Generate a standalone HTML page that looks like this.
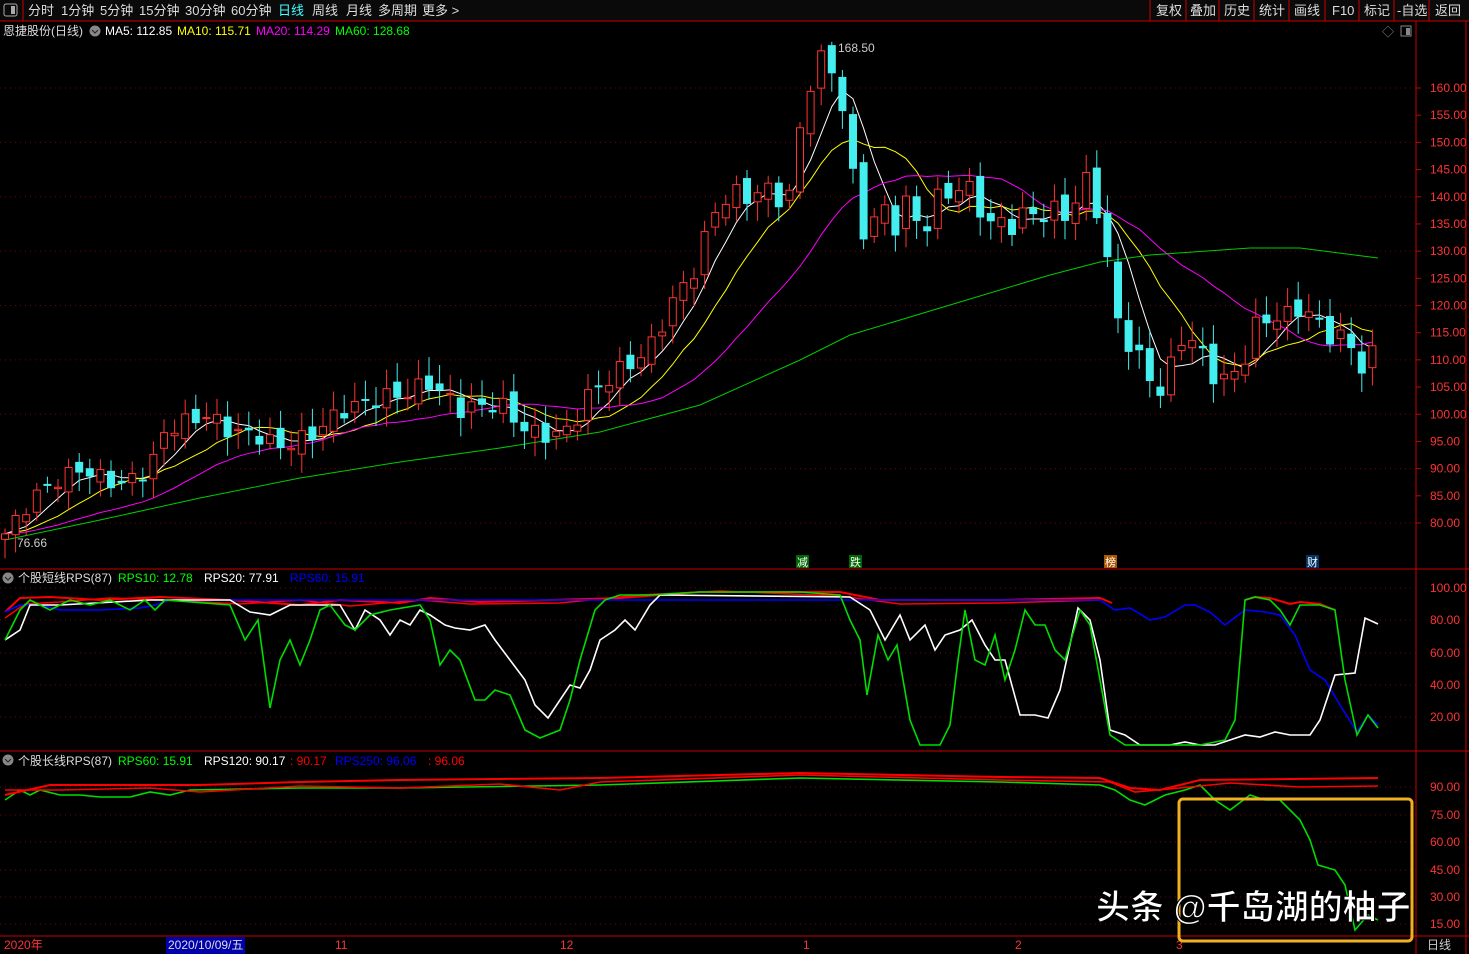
<!DOCTYPE html>
<html><head><meta charset="utf-8"><style>
body{margin:0;background:#000;width:1469px;height:954px;overflow:hidden;font-family:"Liberation Sans","Noto Sans CJK SC",sans-serif}
svg{position:absolute;left:0;top:0}
</style></head><body>
<svg id="s" width="1469" height="954" xmlns="http://www.w3.org/2000/svg" font-family="Liberation Sans, Noto Sans CJK SC, sans-serif">
<rect width="1469" height="954" fill="#000"/>
<!-- top bar -->
<rect x="0" y="0" width="1469" height="21" fill="#0a0a0a"/>
<line x1="0" y1="21" x2="1469" y2="21" stroke="#c00" />
<rect x="4" y="4" width="13" height="12" fill="none" stroke="#aaa" rx="2"/><rect x="11" y="6" width="4" height="8" fill="#aaa"/>
<line x1="23" y1="0" x2="23" y2="21" stroke="#c00"/>
<g font-size="13" fill="#ddd">
<text x="28" y="15">分时</text><text x="61" y="15">1分钟</text><text x="100" y="15">5分钟</text><text x="139" y="15">15分钟</text><text x="185" y="15">30分钟</text><text x="231" y="15">60分钟</text>
<text x="278" y="15" fill="#4ff">日线</text><text x="312" y="15">周线</text><text x="346" y="15">月线</text><text x="378" y="15">多周期</text><text x="422" y="15">更多 &gt;</text>
</g>
<g stroke="#c00"><line x1="1150" y1="0" x2="1150" y2="21"/><line x1="1186" y1="0" x2="1186" y2="21"/><line x1="1219" y1="0" x2="1219" y2="21"/><line x1="1254" y1="0" x2="1254" y2="21"/><line x1="1289" y1="0" x2="1289" y2="21"/><line x1="1325" y1="0" x2="1325" y2="21"/><line x1="1359" y1="0" x2="1359" y2="21"/><line x1="1394" y1="0" x2="1394" y2="21"/><line x1="1429" y1="0" x2="1429" y2="21"/></g>
<g font-size="13" fill="#ddd"><text x="1156" y="15">复权</text><text x="1190" y="15">叠加</text><text x="1224" y="15">历史</text><text x="1259" y="15">统计</text><text x="1294" y="15">画线</text><text x="1332" y="15">F10</text><text x="1364" y="15">标记</text><text x="1397" y="15">-自选</text><text x="1435" y="15">返回</text></g>
<!-- frame -->
<g stroke="#c00" fill="none"><line x1="1416" y1="21" x2="1416" y2="954"/><line x1="1466" y1="21" x2="1466" y2="954"/>
<line x1="0" y1="569" x2="1469" y2="569"/><line x1="0" y1="751" x2="1469" y2="751"/><line x1="0" y1="936" x2="1469" y2="936"/></g>
<text x="1382" y="36" font-size="12" fill="#888">◇</text><rect x="1401" y="26" width="10" height="10" fill="none" stroke="#888"/><rect x="1406" y="28" width="4" height="7" fill="#888"/>
<!-- header -->
<g font-size="12"><text x="3" y="35" fill="#ddd">恩捷股份(日线)</text><circle cx="95" cy="31" r="5.5" fill="#888"/><path d="M92 30l3 3 3-3" stroke="#222" fill="none"/>
<text x="105" y="35" fill="#fff">MA5: 112.85</text><text x="177" y="35" fill="#ff0">MA10: 115.71</text><text x="256" y="35" fill="#f0f">MA20: 114.29</text><text x="335" y="35" fill="#0f0">MA60: 128.68</text></g>
<g font-size="12"><circle cx="8" cy="578" r="5.5" fill="#888"/><path d="M5 577l3 3 3-3" stroke="#222" fill="none"/>
<text x="18" y="582" fill="#ddd">个股短线RPS(87)</text><text x="118" y="582" fill="#0f0">RPS10: 12.78</text><text x="204" y="582" fill="#fff">RPS20: 77.91</text><text x="290" y="582" fill="#00f">RPS60: 15.91</text>
<circle cx="8" cy="760" r="5.5" fill="#888"/><path d="M5 759l3 3 3-3" stroke="#222" fill="none"/>
<text x="18" y="765" fill="#ddd">个股长线RPS(87)</text><text x="118" y="765" fill="#0f0">RPS60: 15.91</text><text x="204" y="765" fill="#fff">RPS120: 90.17</text><text x="290" y="765" fill="#f00">: 90.17</text><text x="335" y="765" fill="#00f">RPS250: 96.06</text><text x="428" y="765" fill="#f00">: 96.06</text></g>
<g id="dyn"></g>
<!-- signals -->
<g font-size="11" fill="#fff"><rect x="796" y="555" width="13" height="13" fill="#060"/><text x="797" y="566">减</text><rect x="849" y="555" width="13" height="13" fill="#060"/><text x="850" y="566">跌</text><rect x="1104" y="555" width="13" height="13" fill="#a50"/><text x="1105" y="566">榜</text><rect x="1306" y="555" width="13" height="13" fill="#036"/><text x="1307" y="566">财</text></g>
<text x="838" y="52" font-size="12" fill="#ccc">168.50</text><text x="17" y="547" font-size="12" fill="#ccc">76.66</text>
<!-- bottom axis -->
<g font-size="12"><text x="4" y="949" fill="#f33">2020年</text><rect x="166" y="937" width="79" height="17" fill="#00a"/><text x="168" y="949" fill="#ddd">2020/10/09/五</text>
<text x="335" y="949" fill="#f33">11</text><text x="560" y="949" fill="#f33">12</text><text x="803" y="949" fill="#f33">1</text><text x="1015" y="949" fill="#f33">2</text><text x="1176" y="949" fill="#f33">3</text><text x="1427" y="949" fill="#ccc">日线</text></g>
<!-- highlight box + watermark -->
<rect x="1179" y="799" width="233" height="142" rx="4" fill="none" stroke="#f0b020" stroke-width="3"/>
<text x="1096" y="919" font-size="34" font-weight="bold" fill="#fff" stroke="#000" stroke-width="1" font-family="Liberation Sans, Noto Sans CJK SC, sans-serif">头条 @千岛湖的柚子</text>
</svg>
<script>
var NS="http://www.w3.org/2000/svg",g=document.getElementById("dyn"),h="";
function pl(pts,c,w){h+='<polyline fill="none" stroke="'+c+'" stroke-width="'+(w||1.3)+'" points="'+pts.map(function(p){return p[0]+','+p[1]}).join(' ')+'"/>';}
function F(a){var r=[];for(var i=0;i<a.length;i+=2)r.push([a[i],a[i+1]]);return r;}
// grid
var py=function(p){return 523-(p-80)*5.4375};
for(var p=80;p<=160;p+=5){var y=py(p);if(p%10==0)h+='<line x1="0" x2="1416" y1="'+y+'" y2="'+y+'" stroke="#700" stroke-dasharray="1,4"/>';h+='<line x1="1416" x2="1421" y1="'+y+'" y2="'+y+'" stroke="#c00"/><text x="1430" y="'+(y+4)+'" font-size="12" fill="#f33">'+p.toFixed(2)+'</text>';}
[[100,588],[80,620],[60,653],[40,685],[20,717]].forEach(function(a){h+='<line x1="0" x2="1416" y1="'+a[1]+'" y2="'+a[1]+'" stroke="#700" stroke-dasharray="1,4"/><text x="1430" y="'+(a[1]+4)+'" font-size="12" fill="#f33">'+a[0].toFixed(2)+'</text>';});
[[90,787],[75,815],[60,842],[45,870],[30,897],[15,924]].forEach(function(a){h+='<line x1="0" x2="1416" y1="'+a[1]+'" y2="'+a[1]+'" stroke="#700" stroke-dasharray="1,4"/><text x="1430" y="'+(a[1]+4)+'" font-size="12" fill="#f33">'+a[0].toFixed(2)+'</text>';});
// closes
var K=F([5,78,40,86,80,90,120,87,150,90,165,97,205,100,230,97,260,96,280,94,310,96,330,99,345,101,380,103,410,104,430,106,460,101,500,102,520,98,540,96,570,97,590,104,620,108,650,112,670,120,690,125,705,132,720,140,740,140,760,141,790,140,800,152,812,163,825,165,835,163,845,155,855,140,865,133,880,138,895,135,910,140,920,133,940,140,960,142,975,140,990,135,1010,135,1030,137,1050,137,1070,137,1085,143,1100,137,1110,125,1120,115,1135,112,1145,108,1155,105,1165,104,1175,112,1185,115,1200,112,1210,108,1220,106,1240,108,1255,116,1270,118,1290,118,1300,120,1312,118,1325,115,1345,114,1355,111,1365,108,1378,113]);
function interp(x){for(var i=1;i<K.length;i++)if(x<=K[i][0]){var a=K[i-1],b=K[i];return a[1]+(b[1]-a[1])*(x-a[0])/(b[0]-a[0]);}return K[K.length-1][1];}
var N=130,C=[],X=[];
for(var i=0;i<N;i++){var x=5+i*10.6;X.push(x);C.push(interp(x)+Math.sin(i*2.3)*1.6*(interp(x)/100));}
var pad=[];for(i=0;i<20;i++)pad.push(78);var all=pad.concat(C);
function ma(n){var r=[];for(var i=0;i<N;i++){var s=0;for(var j=0;j<n;j++)s+=all[i+20-j];r.push([X[i],py(s/n)]);}return r;}
pl(ma(5),"#fff",1);pl(ma(10),"#ff0",1);pl(ma(20),"#f0f",1);
pl(F([5,540,100,520,200,498,300,478,400,462,500,448,600,432,700,405,800,360,850,335,950,305,1050,275,1100,262,1150,255,1250,248,1300,248,1378,258]),"#0c0",1);
for(i=0;i<N;i++){var o=i?C[i-1]+Math.cos(i*1.7)*1.2:77,c=C[i],up=c>=o,t=Math.max(o,c),b=Math.min(o,c);var hi=t+1+Math.abs(Math.sin(i*3.1))*2.5,lo=b-1-Math.abs(Math.cos(i*2.7))*2.5;
if(i==78){hi=168.5;}
var col=up?"#f33":"#4ee";var x=X[i];
h+='<line x1="'+x+'" x2="'+x+'" y1="'+py(hi)+'" y2="'+py(lo)+'" stroke="'+col+'"/>';
var yt=py(t),hh=Math.max(1,py(b)-yt);
h+='<rect x="'+(x-3.5)+'" y="'+yt+'" width="7" height="'+hh+'" fill="'+(up?"#000":"#4ee")+'" stroke="'+col+'"/>';}
// RPS short
pl(F([5,612,20,598,50,597,100,600,160,597,230,600,300,605,340,600,400,603,430,598,480,602,550,600,620,598,700,592,840,592,880,600,1000,600,1100,598,1112,603]),"#f00",2);
pl(F([5,618,25,604,60,602,110,598,165,600,240,604,300,600,350,606,420,600,470,604,560,603,640,595,720,591,840,596,900,604,1000,603,1100,600]),"#f00",1.5);
pl(F([1245,600,1255,597,1270,598,1290,604,1300,602,1320,604,1335,610]),"#f00",2);
pl(F([5,612,20,605,40,605,60,610,100,610,140,608,155,605,170,600,860,600,1100,600,1115,610,1130,608,1150,620,1165,617,1185,605,1195,605,1210,612,1225,625,1245,610,1265,612,1280,615,1295,635,1310,670,1325,680,1340,705,1357,732,1368,715,1378,725]),"#00f",1.6);
pl(F([5,640,20,630,30,605,60,605,150,600,230,600,250,612,270,615,290,605,340,605,355,630,365,610,380,620,390,635,400,620,410,625,420,610,430,615,445,625,455,628,470,630,485,625,495,640,510,660,525,680,535,705,548,718,560,700,570,685,580,688,590,670,600,640,615,630,625,620,635,630,650,605,660,595,850,597,870,610,885,640,900,615,910,640,925,625,935,650,945,635,960,630,972,620,985,645,995,660,1005,660,1020,715,1035,715,1048,718,1060,690,1078,608,1090,620,1100,660,1110,730,1125,735,1140,745,1170,745,1185,742,1200,745,1215,745,1230,740,1245,735,1260,737,1275,732,1290,735,1310,735,1320,720,1335,675,1355,673,1365,618,1378,624]),"#fff",1.6);
pl(F([5,640,20,610,30,600,50,610,70,600,90,605,110,600,130,610,145,600,155,610,165,600,230,605,245,640,258,620,270,708,280,660,290,640,300,665,310,640,320,610,330,605,345,625,355,630,370,615,390,610,420,605,430,620,440,665,450,650,460,660,475,700,485,700,495,690,510,695,525,730,540,738,560,730,570,700,580,660,595,610,605,600,620,595,650,595,700,592,800,592,840,595,850,620,860,640,867,695,878,635,888,660,897,645,910,720,920,745,940,745,950,725,958,660,965,610,975,660,985,665,995,635,1005,680,1015,650,1025,610,1035,625,1045,625,1055,650,1065,660,1080,610,1090,625,1100,680,1110,735,1125,745,1200,745,1225,740,1235,720,1245,600,1255,597,1270,600,1280,610,1290,625,1300,605,1320,605,1335,610,1345,680,1357,735,1368,715,1378,728]),"#0d0",1.6);
// RPS long
pl(F([5,800,20,790,30,795,40,790,60,795,80,795,100,797,130,797,150,792,170,795,190,790,300,788,400,788,600,785,800,778,1000,782,1100,785,1115,790,1130,800,1145,805,1165,795,1185,790,1200,785,1215,800,1230,810,1250,795,1265,800,1280,800,1300,820,1310,840,1318,865,1335,870,1345,885,1355,930,1368,915,1378,920]),"#0d0",1.6);
pl(F([5,795,50,785,200,785,300,782,400,780,600,778,800,773,1000,777,1100,778,1130,788,1160,790,1200,780,1378,778]),"#f00",2);
pl(F([5,790,60,790,150,788,200,792,300,786,400,788,500,784,560,790,600,782,800,775,1000,780,1110,782,1135,792,1180,788,1230,783,1300,787,1378,786]),"#f00",1.6);
g.innerHTML=h;
</script>
</body></html>
